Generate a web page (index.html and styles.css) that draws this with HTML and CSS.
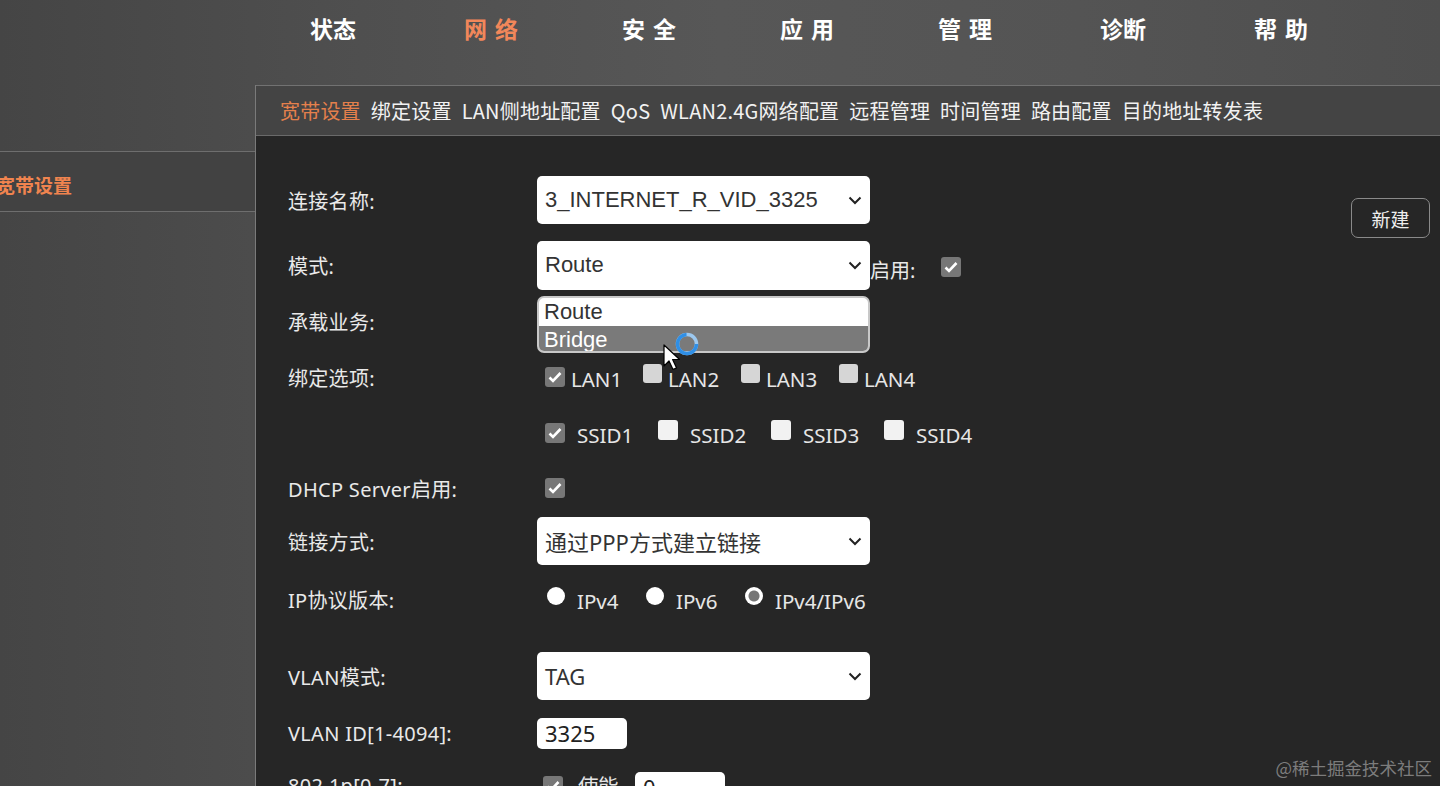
FILE: index.html
```html
<!DOCTYPE html>
<html lang="zh-CN">
<head>
<meta charset="utf-8">
<title>宽带设置</title>
<link rel="stylesheet" href="styles.css">
</head>
<body>
<header class="topbar">
  <nav class="mainnav">
    <a class="nav-item">状态</a>
    <a class="nav-item spaced active">网络</a>
    <a class="nav-item spaced">安全</a>
    <a class="nav-item spaced">应用</a>
    <a class="nav-item spaced">管理</a>
    <a class="nav-item">诊断</a>
    <a class="nav-item spaced">帮助</a>
  </nav>
</header>
<div class="layout">
  <aside class="sidebar">
    <div class="side-item"><span class="side-text">宽带设置</span></div>
  </aside>
  <main class="main">
    <div class="subnav">
      <span class="sub active">宽带设置</span>
      <span class="sub">绑定设置</span>
      <span class="sub">LAN侧地址配置</span>
      <span class="sub">QoS</span>
      <span class="sub">WLAN2.4G网络配置</span>
      <span class="sub">远程管理</span>
      <span class="sub">时间管理</span>
      <span class="sub">路由配置</span>
      <span class="sub">目的地址转发表</span>
    </div>
    <section class="panel">
      <div class="form">
        <div class="row r1">
          <span class="label">连接名称:</span>
          <div class="field">
            <div class="select"><span>3_INTERNET_R_VID_3325</span><svg class="chev" viewBox="0 0 14 9" width="14" height="9"><path d="M1.5 1.5l5.5 5.5 5.5-5.5" fill="none" stroke="#222" stroke-width="2"/></svg></div>
          </div>
        </div>
        <div class="row r2">
          <span class="label">模式:</span>
          <div class="field inline">
            <div class="dropwrap">
              <div class="select"><span>Route</span><svg class="chev" viewBox="0 0 14 9" width="14" height="9"><path d="M1.5 1.5l5.5 5.5 5.5-5.5" fill="none" stroke="#222" stroke-width="2"/></svg></div>
              <div class="dropdown">
                <div class="opt">Route</div>
                <div class="opt hl">Bridge</div>
              </div>
              <svg class="spinner" viewBox="0 0 26 26" width="26" height="26"><circle cx="13" cy="13" r="9.5" fill="none" stroke="#9cc8ef" stroke-width="3.5"/><circle cx="13" cy="13" r="9.5" fill="none" stroke="#2f8fe6" stroke-width="3.5" stroke-dasharray="44 15.7"/></svg>
              <svg class="cursor" viewBox="0 0 17 27" width="17" height="27"><path d="M1 1v21l5-5 4 8.5 3.6-1.6-4-8.4h7z" fill="#fff" stroke="#000" stroke-width="1.2" stroke-linejoin="round"/></svg>
            </div>
            <span class="enable-label">启用:</span>
            <span class="box checked enable-box"><svg viewBox="0 0 20 20" width="20" height="20"><path d="M4.5 10.5l3.5 3.5 7.5-8" fill="none" stroke="#fff" stroke-width="2.6"/></svg></span>
          </div>
        </div>
        <div class="row r3">
          <span class="label">承载业务:</span>
          <div class="field"></div>
        </div>
        <div class="row r4">
          <span class="label">绑定选项:</span>
          <div class="field checks lan">
            <span class="chk"><span class="box checked"><svg viewBox="0 0 20 20" width="20" height="20"><path d="M4.5 10.5l3.5 3.5 7.5-8" fill="none" stroke="#fff" stroke-width="2.6"/></svg></span><span class="chk-text">LAN1</span></span>
            <span class="chk"><span class="box off"></span><span class="chk-text">LAN2</span></span>
            <span class="chk"><span class="box off"></span><span class="chk-text">LAN3</span></span>
            <span class="chk"><span class="box off"></span><span class="chk-text">LAN4</span></span>
          </div>
        </div>
        <div class="row r5">
          <span class="label"></span>
          <div class="field checks ssid">
            <span class="chk"><span class="box checked"><svg viewBox="0 0 20 20" width="20" height="20"><path d="M4.5 10.5l3.5 3.5 7.5-8" fill="none" stroke="#fff" stroke-width="2.6"/></svg></span><span class="chk-text">SSID1</span></span>
            <span class="chk"><span class="box white"></span><span class="chk-text">SSID2</span></span>
            <span class="chk"><span class="box white"></span><span class="chk-text">SSID3</span></span>
            <span class="chk"><span class="box white"></span><span class="chk-text">SSID4</span></span>
          </div>
        </div>
        <div class="row r6">
          <span class="label">DHCP Server启用:</span>
          <div class="field checks">
            <span class="box checked"><svg viewBox="0 0 20 20" width="20" height="20"><path d="M4.5 10.5l3.5 3.5 7.5-8" fill="none" stroke="#fff" stroke-width="2.6"/></svg></span>
          </div>
        </div>
        <div class="row r7">
          <span class="label">链接方式:</span>
          <div class="field">
            <div class="select cjk"><span>通过PPP方式建立链接</span><svg class="chev" viewBox="0 0 14 9" width="14" height="9"><path d="M1.5 1.5l5.5 5.5 5.5-5.5" fill="none" stroke="#222" stroke-width="2"/></svg></div>
          </div>
        </div>
        <div class="row r8">
          <span class="label">IP协议版本:</span>
          <div class="field radios">
            <span class="rad"><span class="radio"></span><span class="chk-text">IPv4</span></span>
            <span class="rad"><span class="radio"></span><span class="chk-text">IPv6</span></span>
            <span class="rad"><span class="radio on"></span><span class="chk-text">IPv4/IPv6</span></span>
          </div>
        </div>
        <div class="row r9">
          <span class="label">VLAN模式:</span>
          <div class="field">
            <div class="select cjk"><span>TAG</span><svg class="chev" viewBox="0 0 14 9" width="14" height="9"><path d="M1.5 1.5l5.5 5.5 5.5-5.5" fill="none" stroke="#222" stroke-width="2"/></svg></div>
          </div>
        </div>
        <div class="row r10">
          <span class="label">VLAN ID[1-4094]:</span>
          <div class="field">
            <div class="input">3325</div>
          </div>
        </div>
        <div class="row r11">
          <span class="label">802.1p[0-7]:</span>
          <div class="field p8021">
            <span class="box checked"><svg viewBox="0 0 20 20" width="20" height="20"><path d="M4.5 10.5l3.5 3.5 7.5-8" fill="none" stroke="#fff" stroke-width="2.6"/></svg></span>
            <span class="chk-text enable-text">使能</span>
            <div class="input small">0</div>
          </div>
        </div>
      </div>
      <button class="btn-new" type="button">新建</button>
    </section>
  </main>
</div>
<div class="watermark">@稀土掘金技术社区</div>
</body>
</html>
```

FILE: styles.css
```css
html, body {
  margin: 0;
  padding: 0;
}

body {
  width: 1440px;
  height: 786px;
  overflow: hidden;
  position: relative;
  background: linear-gradient(90deg, #454545 0%, #4f4f4f 25%, #575757 50%, #545454 75%, #4e4e4e 100%);
  font-family: "Noto Sans", "Noto Sans CJK SC", sans-serif;
  color: #e8e8e8;
}

/* top navigation */
.topbar {
  height: 85px;
}

.mainnav {
  display: flex;
  padding-left: 254px;
}

.nav-item {
  width: 158px;
  height: 56px;
  line-height: 56px;
  text-align: center;
  color: #ffffff;
  font-family: "Noto Sans CJK SC", sans-serif;
  font-weight: 700;
  font-size: 23px;
  box-sizing: border-box;
}

.nav-item.spaced {
  letter-spacing: 8px;
  padding-left: 8px;
}

.nav-item.active {
  color: #f2875a;
}

/* layout */
.layout {
  display: flex;
  height: 701px;
}

.sidebar {
  width: 255px;
  flex: none;
  padding-top: 66px;
  box-sizing: border-box;
}

.side-item {
  height: 61px;
  box-sizing: border-box;
  border-top: 1px solid #6e6e6e;
  border-bottom: 1px solid #6e6e6e;
  background: #424242;
  display: flex;
  align-items: center;
  overflow: hidden;
}

.side-text {
  margin-left: -4px;
  margin-top: 6px;
  color: #f0844f;
  font-family: "Noto Sans CJK SC", sans-serif;
  font-weight: 700;
  font-size: 19px;
}

.main {
  flex: 1;
  display: flex;
  flex-direction: column;
  border-left: 1px solid #7a7a7a;
  min-height: 0;
}

.subnav {
  flex: none;
  height: 51px;
  box-sizing: border-box;
  border-top: 1px solid #727272;
  border-bottom: 1px solid #6a6a6a;
  background: #444444;
  display: flex;
  align-items: center;
  gap: 10px;
  padding-left: 24px;
  font-family: "Noto Sans CJK SC", sans-serif;
  font-size: 20px;
  color: #f2f2f2;
  letter-spacing: 0.2px;
}

.sub.active {
  color: #e5804c;
}

.panel {
  flex: 1;
  min-height: 0;
  overflow: hidden;
  background: #262626;
  display: flex;
  justify-content: space-between;
  align-items: flex-start;
  padding: 36px 10px 0 32px;
}

/* form */
.form {
  display: flex;
  flex-direction: column;
  flex: none;
}

.row {
  display: grid;
  grid-template-columns: 249px auto;
  align-items: center;
  height: 56px;
  flex: none;
}

.r2 { margin-top: 9px; }
.r6 { height: 54px; }
.r7 { height: 52px; }
.r8 { height: 64px; }
.r9 { margin-top: 17px; }
.r10 { height: 58px; }
.r11 { height: 46px; }

.label {
  font-size: 20px;
  color: #e9e9e9;
  font-family: "Noto Sans", "Noto Sans CJK SC", sans-serif;
  letter-spacing: 0.3px;
}

.field {
  display: flex;
  align-items: center;
}

.select {
  width: 333px;
  height: 48px;
  box-sizing: border-box;
  background: #ffffff;
  border-radius: 5px;
  display: flex;
  align-items: center;
  justify-content: space-between;
  padding: 0 8px 0 8px;
  font-family: "Liberation Sans", Arial, sans-serif;
  font-size: 22px;
  color: #333333;
}

.select.cjk {
  font-family: "Noto Sans", "Noto Sans CJK SC", sans-serif;
  font-size: 22px;
}

.chev {
  flex: none;
}

.r2 .select {
  height: 49px;
}

.dropwrap {
  position: relative;
}

.dropdown {
  position: absolute;
  left: 0;
  top: 55px;
  width: 333px;
  height: 57px;
  box-sizing: border-box;
  border: 2px solid #c8c8c8;
  border-radius: 7px;
  overflow: hidden;
  background: #ffffff;
  font-family: "Liberation Sans", Arial, sans-serif;
  font-size: 22px;
  z-index: 5;
}

.opt {
  height: 28px;
  line-height: 28px;
  padding-left: 5px;
  color: #333333;
}

.opt.hl {
  background: #7a7a7a;
  color: #ffffff;
}

.spinner {
  position: absolute;
  left: 137px;
  top: 90px;
  z-index: 6;
}

.cursor {
  position: absolute;
  left: 126px;
  top: 103px;
  z-index: 7;
}

.enable-label {
  font-size: 20px;
  color: #e9e9e9;
  margin-top: 8px;
}

.enable-box {
  margin-left: 26px;
  margin-top: 3px;
}

/* checkboxes */
.checks {
  padding-left: 8px;
}

.chk {
  display: flex;
  align-items: center;
}

.lan .chk {
  width: 98px;
}

.ssid .chk {
  width: 113px;
}

.box {
  width: 20px;
  height: 20px;
  border-radius: 3px;
  flex: none;
  display: block;
  box-sizing: border-box;
}

.box svg {
  display: block;
}

.box.checked {
  background: #777777;
}

.box.off {
  background: #d6d6d6;
  width: 19px;
  height: 19px;
  margin-top: -8px;
}

.box.white {
  background: #f2f2f2;
  margin-top: -6px;
}

.chk-text {
  font-size: 20.5px;
  color: #e6e6e6;
  font-family: "Noto Sans", sans-serif;
  letter-spacing: 0;
}

.lan .chk-text {
  margin-left: 6px;
  margin-top: 3px;
}

.ssid .chk-text {
  margin-left: 12px;
  margin-top: 3px;
}

/* radios */
.radios {
  padding-left: 10px;
}

.rad {
  display: flex;
  align-items: center;
  width: 99px;
}

.radio {
  width: 18px;
  height: 18px;
  border-radius: 50%;
  background: #ffffff;
  flex: none;
  margin-top: -6px;
}

.radio.on {
  background: radial-gradient(circle, #767676 0 5px, #ffffff 6px);
}

.rad .chk-text {
  margin-left: 12px;
  margin-top: 3px;
}

/* inputs */
.input {
  width: 90px;
  height: 31px;
  box-sizing: border-box;
  background: #ffffff;
  border-radius: 5px;
  padding-left: 8px;
  line-height: 31px;
  font-family: "Noto Sans", sans-serif;
  font-size: 22px;
  color: #222222;
}

.p8021 {
  align-self: start;
  align-items: flex-start;
  padding-left: 6px;
}

.p8021 .box {
  margin-top: 14px;
}

.enable-text {
  margin-left: 15px;
  margin-top: 8px;
}

.input.small {
  margin-left: 17px;
  margin-top: 10px;
  height: 32px;
}

/* new button */
.btn-new {
  flex: none;
  margin-top: 26px;
  width: 79px;
  height: 40px;
  background: transparent;
  border: 1.5px solid #8a8a8a;
  border-radius: 7px;
  color: #eeeeee;
  font-family: "Noto Sans CJK SC", sans-serif;
  font-size: 19px;
  padding: 0;
}

.watermark {
  position: absolute;
  right: 8px;
  bottom: 6px;
  font-family: "Noto Sans CJK SC", sans-serif;
  font-size: 17.5px;
  color: rgba(200, 200, 200, 0.55);
}
```
